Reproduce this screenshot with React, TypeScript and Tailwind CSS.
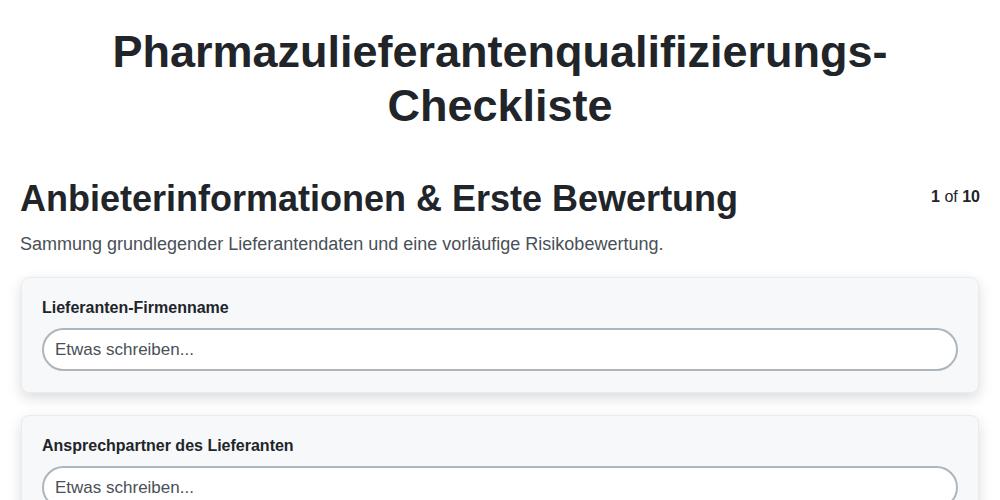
export default function App() {
  const fields = ['Lieferanten-Firmenname', 'Ansprechpartner des Lieferanten'];
  return (
    <div className="min-h-screen bg-white font-['Liberation_Sans',Arial,sans-serif] text-[#212529]">
      <h1 className="mx-auto max-w-[860px] pt-[25px] text-center text-[45px] font-bold leading-[54px]">
        Pharmazulieferantenqualifizierungs-Checkliste
      </h1>
      <div className="px-5 pt-[44px]">
        <div className="flex items-start justify-between">
          <h2 className="text-[36px] font-bold leading-[44px]">Anbieterinformationen &amp; Erste Bewertung</h2>
          <div className="pt-[8px] text-[16px]">
            <span className="font-bold">1</span> of <span className="font-bold">10</span>
          </div>
        </div>
        <p className="mt-[10px] text-[18px] text-[#495057]">
          Sammung grundlegender Lieferantendaten und eine vorläufige Risikobewertung.
        </p>
        <div className="mt-[19px] flex flex-col gap-[22px]">
          {fields.map(f => (
            <div
              key={f}
              className="mx-px rounded-lg border border-[#e9ecef] bg-[#f7f8fa] px-5 pt-[18px] pb-[21px] shadow-[0_5px_14px_rgba(0,0,0,0.14)]"
            >
              <label className="block text-[16px] font-bold leading-[24px]">{f}</label>
              <input
                type="text"
                placeholder="Etwas schreiben..."
                className="mt-[8px] h-[43px] w-full rounded-full border-2 border-[#adb5bd] bg-white px-[11px] text-[17px] outline-none placeholder:text-[#495057]"
              />
            </div>
          ))}
        </div>
      </div>
    </div>
  );
}
